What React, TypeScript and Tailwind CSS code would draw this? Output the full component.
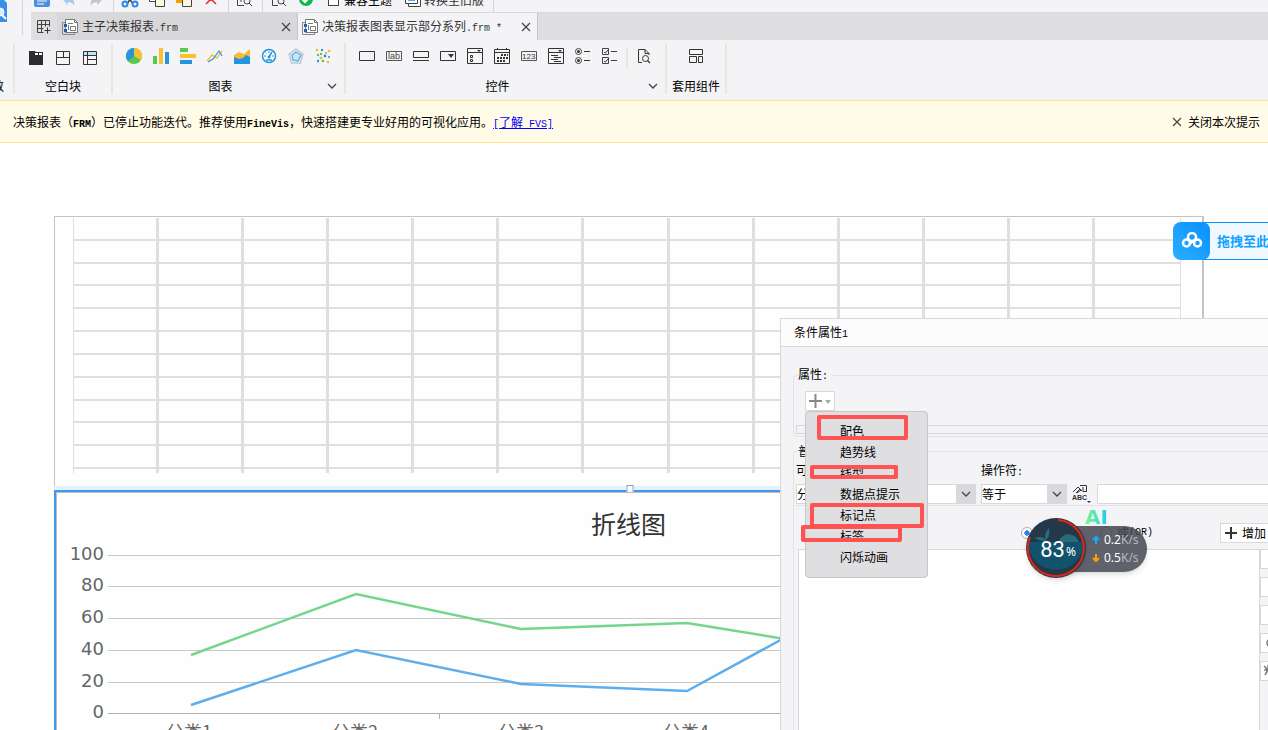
import type { ReactNode } from "react";

const mono = "font-['Liberation_Mono',monospace] text-[10px]";

function Icon({ children, size = 16 }: { children: ReactNode; size?: number }) {
  return (
    <svg
      width={size}
      height={size}
      viewBox={`0 0 ${size} ${size}`}
      fill="none"
      className="shrink-0 overflow-visible"
      aria-hidden="true"
    >
      {children}
    </svg>
  );
}

function CloseIcon() {
  return (
    <Icon size={10}>
      <path d="M1 1l8 8M9 1L1 9" stroke="#444" strokeWidth="1.2" />
    </Icon>
  );
}

function ChevronIcon() {
  return (
    <Icon size={10}>
      <path d="M1 3l4 4 4-4" stroke="#444" strokeWidth="1.3" />
    </Icon>
  );
}

function ReportIcon() {
  return (
    <Icon>
      <path d="M3 3.500H.5v12h12V14" stroke="#888" />
      <path d="M3.500.5h9l3 3v10h-12z" fill="#fff" stroke="#777" />
      <path d="M12.500.5v3h3" stroke="#777" />
      <path d="M6 4.500h5M6.500 6v5M8.500 7.500h5v4h-5z" stroke="#777" />
      <path d="M2 5h3v3H2zM2 10h3v3H2z" fill="#1f5fae" />
    </Icon>
  );
}

function ToolGroup({ children }: { children: ReactNode }) {
  return <div className="flex items-center gap-[11px] border-r border-[#d5d5d8] pr-[9px] pl-2">{children}</div>;
}

function TopToolbar() {
  return (
    <div className="flex h-3 items-end overflow-hidden">
      <div className="flex h-6 shrink-0 text-xs text-black">
        <div className="flex items-center gap-[11px] border-r border-[#d5d5d8] pr-[9px] pl-[3px]">
          <Icon>
            <rect width="16" height="15" rx="2" fill="#4b8fe2" />
            <path d="M3 9h10M3 12h7" stroke="#fff" />
          </Icon>
          <Icon>
            <path d="M2 8l5-5v3c5 0 7 3 6 8-1-3-3-4-6-4v3z" fill="#a9c9f3" />
          </Icon>
          <Icon>
            <path d="M14 8L9 3v3c-5 0-7 3-6 8 1-3 3-4 6-4v3z" fill="#c4c4c7" />
          </Icon>
        </div>
        <ToolGroup>
          <Icon>
            <path d="M5 1l5 10M11 1L6 11" stroke="#444" strokeWidth="1.5" />
            <circle cx="3" cy="12" r="2.5" stroke="#2f86e8" strokeWidth="2" />
            <circle cx="13" cy="12" r="2.5" stroke="#2f86e8" strokeWidth="2" />
          </Icon>
          <Icon>
            <path d="M.5 1.500h9v8h-9z" fill="#fff" stroke="#444" />
            <path d="M6.500 4.500h9v10h-9z" fill="#fff7dd" stroke="#444" />
          </Icon>
          <Icon>
            <path d="M0 0h10v11H0z" fill="#f5a000" />
            <path d="M6.500 4.500h9v10h-9z" fill="#fff7dd" stroke="#444" />
          </Icon>
          <Icon>
            <path d="M3 2l10 10M13 2L3 12" stroke="#e23434" strokeWidth="1.6" />
          </Icon>
        </ToolGroup>
        <ToolGroup>
          <Icon>
            <path d="M1 .5h14.500V6M.5 1v12.500H7" stroke="#444" />
            <circle cx="10" cy="9" r="3" stroke="#444" />
            <path d="M12 11l3 3M4 6v4" stroke="#444" />
          </Icon>
        </ToolGroup>
        <div className="flex items-center gap-[11px] border-r border-[#d5d5d8] pr-[9px] pl-2">
          <Icon>
            <path d="M13.500 5V.5h-12v13H7" stroke="#444" />
            <circle cx="10" cy="9" r="3" stroke="#444" />
            <path d="M12 11l3 3" stroke="#444" />
          </Icon>
          <Icon>
            <circle cx="8" cy="7" r="7" fill="#12b74c" />
            <path d="M4 7l3 3 5-5" stroke="#fff" strokeWidth="2" />
          </Icon>
          <label className="ml-[3px] flex items-center gap-[5px]">
            <input type="checkbox" className="size-[11px] appearance-none border border-[#444] bg-white" />
            兼容主题
          </label>
          <button className="ml-[2px] flex items-center gap-[3px] text-[#333]">
            <Icon>
              <path d="M.5.5h12v11H.5zM12.500 4.500h3v10h-12v-3" fill="#fff" stroke="#444" />
              <path d="M3 5h7v4H3z" fill="#5ba2e8" />
            </Icon>
            转换至旧版
          </button>
        </div>
      </div>
    </div>
  );
}

function FileTabs() {
  return (
    <div className="flex h-[27px] bg-[#dfdfe1] text-xs text-[#333]">
      <button className="flex w-[26px] items-center justify-center" aria-label="新建">
        <Icon>
          <path d="M1.500 1.500h12v6M1.500 1.500v12h6M1.500 5.500h12M1.500 9.500h6M5.500 1.500v12M9.500 1.500v6" stroke="#444" />
          <path d="M11.500 8.500v6M8.500 11.500h6" stroke="#333" />
        </Icon>
      </button>
      <div className="flex w-[241px] items-center border-r border-[#c5c5c8] bg-[#d8d8da] pr-[6px] pl-[5px]">
        <ReportIcon />
        <span className="ml-1 flex-1">
          主子决策报表<span className={mono}>.frm</span>
        </span>
        <button aria-label="关闭">
          <CloseIcon />
        </button>
      </div>
      <div className="flex w-[240px] items-center border-r border-[#c5c5c8] bg-[#f4f4f7] pr-[6px] pl-1">
        <ReportIcon />
        <span className="ml-1 flex-1 whitespace-nowrap">
          决策报表图表显示部分系列<span className={mono}>.frm *</span>
        </span>
        <button aria-label="关闭">
          <CloseIcon />
        </button>
      </div>
    </div>
  );
}

function RibbonGroup({ label, more, children }: { label: string; more?: boolean; children: ReactNode }) {
  return (
    <section className="flex h-[51px] flex-col justify-between border-r-2 border-[#e7e7df] px-[13px] pt-[5px]">
      <div className="flex gap-[11px]">{children}</div>
      <div className={`relative text-center text-xs leading-4 text-black ${more ? "pr-4" : ""}`}>
        {label}
        {more && (
          <button className="absolute -right-[6px] bottom-[3px]" aria-label={`更多${label}`}>
            <ChevronIcon />
          </button>
        )}
      </div>
    </section>
  );
}

const chartIcons: ReactNode[] = [
  <>
    <circle cx="8" cy="8" r="8" fill="#5ac84e" />
    <path d="M8 8V0a8 8 0 0 1 6.9 12z" fill="#f9c034" />
    <path d="M8 8V0a8 8 0 0 0-6 13.300z" fill="#2a94dd" />
  </>,
  <>
    <path d="M0 8h4v8H0z" fill="#5ac84e" />
    <path d="M6 0h4v16H6z" fill="#f9c034" />
    <path d="M12 4h4v12h-4z" fill="#2395dd" />
  </>,
  <>
    <path d="M0 0h8v4H0z" fill="#5ac84e" />
    <path d="M0 6h16v4H0z" fill="#f9c034" />
    <path d="M0 12h12v4H0z" fill="#2395dd" />
  </>,
  <>
    <path d="M0 13l5-6 5 3 5-7" stroke="#f9c034" strokeWidth="1.4" />
    <path d="M1 14l5-3 6-8 3 5" stroke="#2395dd" strokeWidth="1.2" />
  </>,
  <>
    <path d="M0 7l5-3 5 2 6-5v15H0z" fill="#f9b934" />
    <path d="M0 9l5 2 4-1 3-3 4 2v7H0z" fill="#2395dd" />
  </>,
  <>
    <circle cx="8" cy="8" r="6.500" fill="#fff" stroke="#2395dd" strokeWidth="1.500" />
    <path d="M8 3v2M3 8h2M11 8h2M4.500 4.500l1 1" stroke="#2395dd" />
    <path d="M8 9l3-5" stroke="#2395dd" strokeWidth="1.500" />
    <path d="M5 12h6" stroke="#2395dd" strokeWidth="1.500" />
    <circle cx="8" cy="9" r="1.500" fill="#2395dd" />
  </>,
  <>
    <path d="M8 1l7 5-2.500 9h-9L1 6z" fill="#e8e8ec" stroke="#c4c7cc" strokeWidth="1.500" />
    <path d="M8 4l5 3-3 6-5-1-1-5z" fill="#c8e5fa" stroke="#58b2ec" strokeWidth="1.300" />
  </>,
  <>
    <g fill="#f9b934">
      <circle cx="2" cy="2" r="1.300" />
      <circle cx="14" cy="3" r="1.300" />
      <circle cx="6" cy="10" r="1.500" />
      <circle cx="11" cy="5" r="1.200" />
      <circle cx="13" cy="14" r="1.300" />
    </g>
    <g fill="#2395dd">
      <circle cx="7" cy="2" r="1.200" />
      <circle cx="10" cy="8" r="1.400" />
      <circle cx="3" cy="13" r="1.200" />
      <circle cx="14" cy="9" r="1" />
    </g>
    <g fill="#5ac84e">
      <circle cx="3" cy="7" r="1.200" />
      <circle cx="8" cy="13" r="1.300" />
      <circle cx="6" cy="6" r="1.200" />
    </g>
  </>,
];

const widgetIcons: ReactNode[] = [
  <path d="M.5 3.500h15v9H.5z" stroke="#333" />,
  <>
    <path d="M.5 3.500h15v9H.5z" stroke="#555" />
    <text x="2" y="11" fontSize="9" fill="#444" fontFamily="Liberation Sans, sans-serif">
      lab
    </text>
  </>,
  <path d="M.5 3.500h15v6H.5zM0 12.500h16" stroke="#333" />,
  <>
    <path d="M.5 3.500h15v9H.5z" stroke="#333" />
    <path d="M8 6h6l-3 4z" fill="#333" />
  </>,
  <>
    <path d="M.5.5h15v15H.5zM0 4.500h16M3.500 7.500h2v2h-2zM3.500 11.500h2v2h-2z" stroke="#333" />
    <path d="M10 2h4l-2 2z" fill="#333" />
  </>,
  <>
    <path d="M.5 1.500h15v14H.5zM0 4.500h16M3.500 0v2M12.500 0v2" stroke="#333" />
    <path d="M7 7h7M3 10h11M3 13h8" stroke="#333" strokeWidth="2" strokeDasharray="2 1" />
  </>,
  <>
    <path d="M.5 3.500h15v9H.5z" stroke="#555" />
    <text x="1" y="11" fontSize="8" fill="#333" fontFamily="Liberation Sans, sans-serif">
      123
    </text>
  </>,
  <>
    <path d="M.5.5h15v15H.5zM0 4.500h16M3 7.500h7M6 9.500h7M3 11.500h7M6 13.500h7" stroke="#333" />
    <path d="M10 2h4l-2 2z" fill="#333" />
  </>,
  <>
    <path d="M9 3.500h6M9 12.500h6" stroke="#333" />
    <circle cx="3.500" cy="3.500" r="3" stroke="#444" />
    <circle cx="3.500" cy="12.500" r="3" stroke="#444" />
    <circle cx="3.500" cy="3.500" r="1.500" fill="#333" />
    <circle cx="3.500" cy="12.500" r="1.500" fill="#333" />
  </>,
  <>
    <path d="M.5.5h6v6h-6zM.5 9.500h6v6h-6zM9 3.500h6M9 12.500h6" stroke="#444" />
    <path d="M2 4l1.500 1L6 2M2 13l1.500 1L6 11" stroke="#333" />
  </>,
];

function Ribbon() {
  return (
    <div className="flex h-[60px] bg-[#f4f4f7] pt-[3px]">
      <div className="flex h-[51px] w-[15px] items-end overflow-hidden border-r-2 border-[#e7e7df] text-xs leading-4 text-black">
        <span className="flex w-1 justify-end">数</span>
      </div>
      <RibbonGroup label="空白块">
        <Icon>
          <path d="M1 3h6l1 1h7v13H1z" fill="#2d2d2f" />
          <path d="M7 5h3v2H7zM11 5h3v2h-3z" fill="#fff" />
        </Icon>
        <Icon>
          <path d="M1.500 3.500h13v13h-13zM1 9.500h14M8.500 3v6" stroke="#333" />
        </Icon>
        <Icon>
          <path d="M2 4h12v3H2z" fill="#bfe4f7" />
          <path d="M1.500 3.500h13v13h-13zM1 7.500h14M5.500 3v13M6 11.500h9" stroke="#333" />
        </Icon>
      </RibbonGroup>
      <RibbonGroup label="图表" more>
        {chartIcons.map((icon, i) => (
          <Icon key={i}>{icon}</Icon>
        ))}
      </RibbonGroup>
      <RibbonGroup label="控件" more>
        {widgetIcons.map((icon, i) => (
          <Icon key={i}>{icon}</Icon>
        ))}
        <div className="-mx-[3px] h-5 w-[2px] bg-[#e7e7df]" />
        <Icon>
          <path d="M6 14.500H2.500v-13H9l4 4V7M9 1.500v4h4" stroke="#333" />
          <circle cx="9.500" cy="10.500" r="3" stroke="#333" />
          <path d="M11.500 12.500l2.500 2.500" stroke="#333" strokeWidth="1.300" />
        </Icon>
      </RibbonGroup>
      <section className="flex h-[51px] flex-col items-center justify-between border-r-2 border-[#e7e7df] px-[5px] pt-[5px]">
        <Icon>
          <path d="M1.500 1.500h13v5h-13zM1.500 8.500h7v6h-7zM10.500 8.500h4v6h-4z" stroke="#333" />
        </Icon>
        <span className="text-xs leading-4 text-black">套用组件</span>
      </section>
    </div>
  );
}

function Notice() {
  return (
    <div className="flex h-[43px] items-center justify-between border-y border-[#ffe58f] bg-[#fffbe6] pr-2 pl-[13px] text-xs text-black">
      <p className="pt-[2px]">
        决策报表（<span className={`${mono} font-bold`}>FRM</span>）已停止功能迭代。推荐使用
        <span className={`${mono} font-bold`}>FineVis</span>，快速搭建更专业好用的可视化应用。
        <a href="#fvs" className="text-[#0000ff] underline">
          <span className={mono}>[</span>了解<span className={mono}> FVS]</span>
        </a>
      </p>
      <button className="flex items-center gap-[6px]">
        <CloseIcon />
        关闭本次提示
      </button>
    </div>
  );
}

function ReportGrid() {
  return (
    <div className="border-t border-r-2 border-l border-[#c4c4c6] pt-px pr-[21px] pb-[13px] pl-[18px]">
      <div className="grid h-[251px] grid-cols-[repeat(13,minmax(0,1fr))] grid-rows-[repeat(11,minmax(0,1fr))] border-x border-[#dfdfdf]">
        {Array.from({ length: 143 }, (_, i) => (
          <div
            key={i}
            className={i % 13 === 12 ? "border-b-2 border-[#dfdfdf]" : "border-r-[3px] border-b-2 border-[#dfdfdf]"}
          />
        ))}
      </div>
      <div className="grid h-1 grid-cols-[repeat(13,minmax(0,1fr))] border-x border-[#dfdfdf]">
        {Array.from({ length: 12 }, (_, i) => (
          <div key={i} className="border-r-[3px] border-[#dfdfdf]" />
        ))}
      </div>
    </div>
  );
}

const axis = [
  { value: 100, y: 62 },
  { value: 80, y: 93 },
  { value: 60, y: 125 },
  { value: 40, y: 157 },
  { value: 20, y: 189 },
  { value: 0, y: 220 },
];

const categories = [
  { name: "分类1", x: 132 },
  { name: "分类2", x: 298 },
  { name: "分类3", x: 464 },
  { name: "分类4", x: 629 },
];

function LineChart() {
  return (
    <section className="relative flex-1 border-t-2 border-l-2 border-[#3f97f2]">
      <div className="absolute -top-[7px] left-1/2 size-[7px] -translate-x-1/2 border border-b-0 border-[#7fa6cf] bg-white" />
      <div className="h-full border-t border-l border-[#bdbdbd]">
        <h2 className="pt-3 pr-1 text-center text-[25px] leading-9 text-[#333]">折线图</h2>
        <svg className="-mt-12 h-[260px] w-full overflow-visible" fill="none">
          {axis.map((tick) => (
            <g key={tick.value}>
              <line x1="51" x2="100%" y1={tick.y + 0.5} y2={tick.y + 0.5} stroke={tick.value === 0 ? "#b0b0b0" : "#c9c9c9"} />
              <text x="47" y={tick.y + 5} textAnchor="end" fontSize="18" fill="#666" fontFamily="DejaVu Sans, sans-serif">
                {tick.value}
              </text>
            </g>
          ))}
          <path d="M382.500 221v5" stroke="#b0b0b0" />
          <polyline points="134,162 299,101 464,136 630,130 795,157" stroke="#73d68c" strokeWidth="2.500" />
          <polyline points="134,212 299,157 464,191 630,198 795,108" stroke="#5faeec" strokeWidth="2.500" />
          {categories.map((c) => (
            <text key={c.name} x={c.x} y="246" textAnchor="middle" fontSize="18" fill="#666">
              {c.name}
            </text>
          ))}
        </svg>
      </div>
    </section>
  );
}

const menuItems = ["配色", "趋势线", "线型", "数据点提示", "标记点", "标签", "闪烁动画"];

const highlights = [
  "top-[3px] left-[11px] h-[25px] w-[91px]",
  "top-[53px] left-1 h-[14px] w-[88px]",
  "top-[91px] left-1 h-[25px] w-[114px]",
  "top-[113px] -left-[5px] h-[17px] w-[101px]",
];

function PropertyMenu() {
  return (
    <div role="menu" className="absolute top-5 left-0 z-10 w-[123px] rounded border border-[#c6c6c9] bg-[#dfdfe1] pt-2 pb-[10px]">
      {menuItems.map((item) => (
        <button key={item} role="menuitem" className="block h-[21px] w-full pl-[34px] text-left leading-[21px]">
          {item}
        </button>
      ))}
      {highlights.map((box) => (
        <div key={box} className={`pointer-events-none absolute rounded-[2px] border-4 border-[#ff5353] ${box}`} />
      ))}
    </div>
  );
}

function SelectBox({ label, value }: { label: string; value: string }) {
  return (
    <div className="relative">
      <select
        aria-label={label}
        defaultValue={value}
        className="block h-5 w-full appearance-none border border-[#d8d8da] bg-white text-xs leading-4 text-black"
      >
        <option>{value}</option>
      </select>
      <span className="pointer-events-none absolute inset-y-0 right-0 flex w-5 items-center justify-center bg-[#d8d9dc]">
        <ChevronIcon />
      </span>
    </div>
  );
}

const sideIcons: ReactNode[] = [
  null,
  null,
  null,
  <path d="M10 4a4 4 0 1 0 0 8" stroke="#777" strokeWidth="1.500" />,
  <path d="M3 3l4 4-3 5M7 2v4M3 7h8" stroke="#777" strokeWidth="1.500" />,
];

function ConditionDialog() {
  return (
    <section className="absolute top-[318px] right-0 bottom-0 left-[780px] flex flex-col border-t border-l border-[#d8d8da] bg-[#f4f4f7] text-xs text-black">
      <h3 className="h-7 shrink-0 border-b border-[#d8d8da] bg-[#fcfcfc] pl-[13px] leading-[26px]">
        条件属性<span className={mono}>1</span>
      </h3>
      <fieldset className="mt-[19px] ml-3 rounded-l border border-r-0 border-[#e3e3e6] pb-[2px]">
        <legend className="ml-1 pr-1 leading-4">
          属性<span className={mono}>:</span>
        </legend>
        <div className="relative mt-[6px] ml-[11px] w-[30px]">
          <button className="flex h-5 w-full items-center justify-center border border-[#d8d8da] bg-white" aria-label="添加属性">
            <svg width="24" height="14" viewBox="0 0 24 14" fill="none">
              <path d="M1 7h13M7.500 0v14" stroke="#888" strokeWidth="2" />
              <path d="M17 6h6l-3 4z" fill="#aaa" />
            </svg>
          </button>
          <PropertyMenu />
        </div>
        <div className="mt-[14px] ml-[2px] h-[9px] border border-r-0 border-[#d8d8da]" />
      </fieldset>
      <fieldset className="mt-[6px] ml-3 flex-1 rounded-l border border-r-0 border-b-0 border-[#e3e3e6]">
        <legend className="ml-1 pr-1 leading-4">普通</legend>
        <div className="ml-[2px] flex items-end gap-[5px] border-b border-[#e3e3e6] pt-[3px] pb-px">
          <div className="w-[180px] space-y-[3px]">
            <p className="leading-4">
              可选列<span className={mono}>:</span>
            </p>
            <SelectBox label="可选列" value="分类" />
          </div>
          <div className="w-[86px] space-y-[3px]">
            <p className="leading-4">
              操作符<span className={mono}>:</span>
            </p>
            <SelectBox label="操作符" value="等于" />
          </div>
          <button aria-label="值类型">
            <Icon size={20}>
              <path d="M1 8l5-5 3 3-4 3M4 9l4-4 2 2M8 1.500h6.500v6H11V3" stroke="#333" />
              <text x="0" y="16" fontSize="7" fontWeight="bold" fill="#333" fontFamily="Liberation Sans, sans-serif">
                ABC
              </text>
              <path d="M15 17h4l-2 2z" fill="#333" />
            </Icon>
          </button>
          <input aria-label="值" className="h-5 min-w-0 flex-1 border border-r-0 border-[#d8d8da] bg-white" />
        </div>
        <div className="mt-[17px] flex h-5 items-center">
          <label className="ml-[227px] flex w-[79px] items-center gap-1 whitespace-nowrap">
            <input
              type="radio"
              name="logic"
              defaultChecked
              className="size-3 appearance-none rounded-full border border-[#aaa] bg-white bg-[radial-gradient(#2f80ed_35%,transparent_40%)]"
            />
            与
          </label>
          <label className="flex flex-1 items-center whitespace-nowrap">
            <input type="radio" name="logic" className="mr-[5px] size-3 appearance-none rounded-full border border-[#aaa] bg-white" />
            或<span className={mono}>(OR)</span>
          </label>
          <button className="flex h-5 w-12 items-center gap-[5px] overflow-hidden border border-r-0 border-[#d8d8da] bg-white pl-1 whitespace-nowrap">
            <Icon size={12}>
              <path d="M0 6h12M6 0v12" stroke="#333" strokeWidth="2" />
            </Icon>
            增加
          </button>
        </div>
        <div className="mt-[6px] ml-1 flex h-[220px]">
          <div className="flex-1 border border-[#d8d8da] bg-white" />
          <div className="flex w-2 flex-col gap-2">
            {sideIcons.map((icon, i) => (
              <button key={i} aria-label={`操作${i + 1}`} className="h-5 overflow-hidden border border-r-0 border-[#d8d8da] bg-white">
                <Icon>{icon}</Icon>
              </button>
            ))}
          </div>
        </div>
      </fieldset>
    </section>
  );
}

function DropTarget() {
  return (
    <div className="absolute top-[222px] right-0 flex h-[38px] w-[95px] overflow-hidden">
      <div className="z-10 flex w-[37px] shrink-0 items-center justify-center rounded-lg bg-linear-to-tr from-[#2aaeff] to-[#0690ff]">
        <Icon size={22}>
          <g stroke="#fff" strokeWidth="2.500">
            <circle cx="11" cy="7" r="4" />
            <circle cx="5.500" cy="13" r="3.500" />
            <circle cx="16.500" cy="13" r="3.500" />
          </g>
          <path d="M8 15l5-5" stroke="#fff" strokeWidth="2" />
        </Icon>
      </div>
      <div className="-ml-2 flex flex-1 items-center border-y border-[#0a8fff] bg-[#eff8ff] pl-[15px] text-[13px] font-bold whitespace-nowrap text-[#12a0ff]">
        拖拽至此
      </div>
    </div>
  );
}

function SpeedBall() {
  return (
    <div className="absolute top-[508px] left-[1026px] h-[70px] w-[121px] font-['Noto_Sans',sans-serif]">
      <span className="absolute -top-[3px] left-[59px] bg-linear-to-r from-[#7cf77c] to-[#15c8f5] bg-clip-text font-['DejaVu_Sans',sans-serif] text-[20px] leading-6 font-bold text-transparent">
        AI
      </span>
      <div className="absolute top-[18px] right-0 left-[30px] flex h-[46px] flex-col rounded-r-full bg-[#434651]/85 py-[6px] pl-9 text-xs leading-4 text-white shadow-md">
        <div className="flex flex-1 items-center gap-1 border-b border-[#5b5e69]">
          <Icon size={8}>
            <path d="M4 8V2M1 4l3-3 3 3" stroke="#1aa8ff" strokeWidth="2" />
          </Icon>
          <span>
            0.2<span className="text-[#b5b7bf]">K/s</span>
          </span>
        </div>
        <div className="flex flex-1 items-center gap-1">
          <Icon size={8}>
            <path d="M4 0v6M1 4l3 3 3-3" stroke="#ff9d0a" strokeWidth="2" />
          </Icon>
          <span>
            0.5<span className="text-[#b5b7bf]">K/s</span>
          </span>
        </div>
      </div>
      <div className="absolute bottom-0 left-0 size-[60px] rounded-full shadow-md">
        <svg width="60" height="60" viewBox="0 0 60 60" fill="none" className="absolute inset-0">
          <circle cx="30" cy="30" r="30" fill="#25384a" />
          <path d="M2 24h56a28 28 0 1 1-56 0z" fill="#11536c" />
          <path d="M9 20c5-2 8-1 10 1 0-5 1-8 4-11 1 6 0 10-4 13-4 0-7-1-10-3z" fill="#266d79" />
          <path d="M32 24c4-7 9-9 14-7 4 1 5 4 7 7z" fill="#266d79" />
          <path d="M32 2a28 28 0 1 1-28 17" stroke="#e6250e" strokeWidth="2" />
        </svg>
        <p className="relative flex h-full items-center justify-center gap-px pt-1 pl-1 text-white">
          <span className="font-['Roboto',sans-serif] text-[22px] leading-6">83</span>
          <span className="mt-1 text-xs">%</span>
        </p>
      </div>
    </div>
  );
}

export default function App() {
  return (
    <main className="relative flex h-screen flex-col overflow-hidden bg-[#fefefe] font-['Noto_Sans_CJK_SC',sans-serif]">
      <header className="shrink-0 bg-[#f4f4f7]">
        <div className="flex h-10">
          <div className="mr-2 h-[35px] w-[23px] border-r border-[#d5d5d8]">
            <svg width="7" height="22" viewBox="0 0 7 22" fill="none">
              <path d="M0 0h4l3 3v19H0z" fill="#3b8de6" />
              <circle cx="0" cy="12" r="4" fill="#d9ecff" stroke="#fff" />
              <path d="M2 15l4 4" stroke="#fff" strokeWidth="2" />
            </svg>
          </div>
          <div className="min-w-0 flex-1">
            <TopToolbar />
            <div className="border-t border-[#dadadc]">
              <FileTabs />
            </div>
          </div>
        </div>
        <Ribbon />
        <Notice />
      </header>
      <div className="mt-[73px] mr-16 ml-[54px] flex min-h-0 flex-1 flex-col">
        <ReportGrid />
        <div className="h-1 shrink-0 bg-[#e5f2fb]" />
        <LineChart />
      </div>
      <DropTarget />
      <ConditionDialog />
      <SpeedBall />
    </main>
  );
}
